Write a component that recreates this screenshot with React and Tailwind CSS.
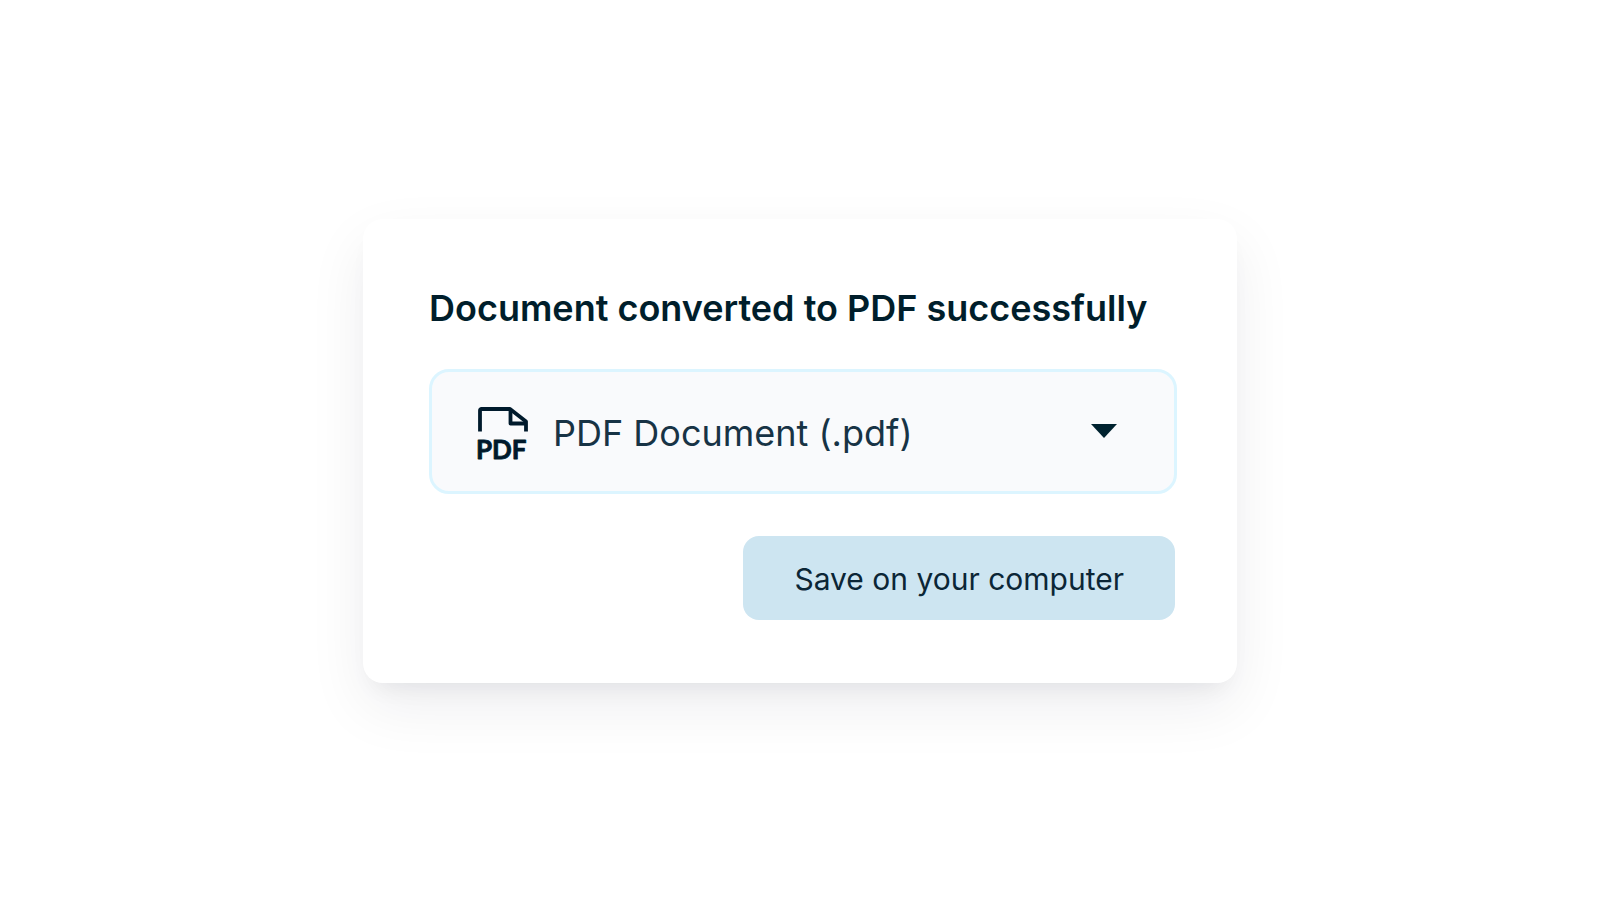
import React, { useState } from "react";

const formats = [
  {
    id: 'pdf',
    name: 'PDF Document (.pdf)'
  },
]

const PdfIcon = () => {
  return (
    <svg className="w-[54px] h-[60px] mt-2" viewBox="0 0 54 60" fill="none" stroke="#001a2c" aria-hidden="true">
      <path d="M3 26.5V5.5A1.5 1.5 0 0 1 4.5 4H33L49 16.5V26.5" strokeWidth="3.8" strokeLinejoin="round" />
      <path d="M33.5 4V18.5H49" strokeWidth="3.8" strokeLinejoin="round" />
      <text x="-1" y="54" fill="#001a2c" strokeWidth="0.8" strokeLinejoin="round" className="font-['Lato',sans-serif] text-[26px] font-bold">PDF</text>
    </svg>
  )
}

const CaretIcon = () => {
  return (
    <svg className="w-[26px] h-[14px]" viewBox="0 0 26 14" fill="#00222f" aria-hidden="true">
      <path d="M0 0H26L13 14Z" />
    </svg>
  )
}

const App = () => {
  const [format, setFormat] = useState('pdf')

  return (
    <main className="min-h-screen flex items-center justify-center bg-white font-['Inter',sans-serif]">
      <section className="w-full max-w-[874px] rounded-[20px] bg-white pt-[65px] pb-[63px] pl-[66px] pr-[60px] shadow-[0_24px_60px_rgba(0,20,40,0.07),0_14px_24px_-12px_rgba(0,20,40,0.08)]">
        <h1 className="text-[36px] leading-[48px] font-semibold text-[#001e2b]">
          Document converted to PDF successfully
        </h1>
        <div className="relative mt-[37px]">
          <select
            aria-label="File format"
            value={format}
            onChange={e => setFormat(e.target.value)}
            className="w-full h-[125px] appearance-none rounded-[20px] border-3 border-[#dcf5ff] bg-[#f9fafc] pl-[121px] pr-20 pt-1 text-[36px] font-normal text-[#173345]"
          >
            {formats.map(item => {
              return <option key={item.id} value={item.id}>{item.name}</option>
            })}
          </select>
          <div className="pointer-events-none absolute inset-0 flex items-center justify-between pl-12 pr-[60px]">
            <PdfIcon />
            <CaretIcon />
          </div>
        </div>
        <div className="mt-[42px] mr-0.5 flex justify-end">
          <button type="button" className="h-[84px] rounded-2xl bg-[#cde5f1] px-[51px] pt-1 text-[30px] font-normal text-[#0b2636]">
            Save on your computer
          </button>
        </div>
      </section>
    </main>
  );
};

export default App;
